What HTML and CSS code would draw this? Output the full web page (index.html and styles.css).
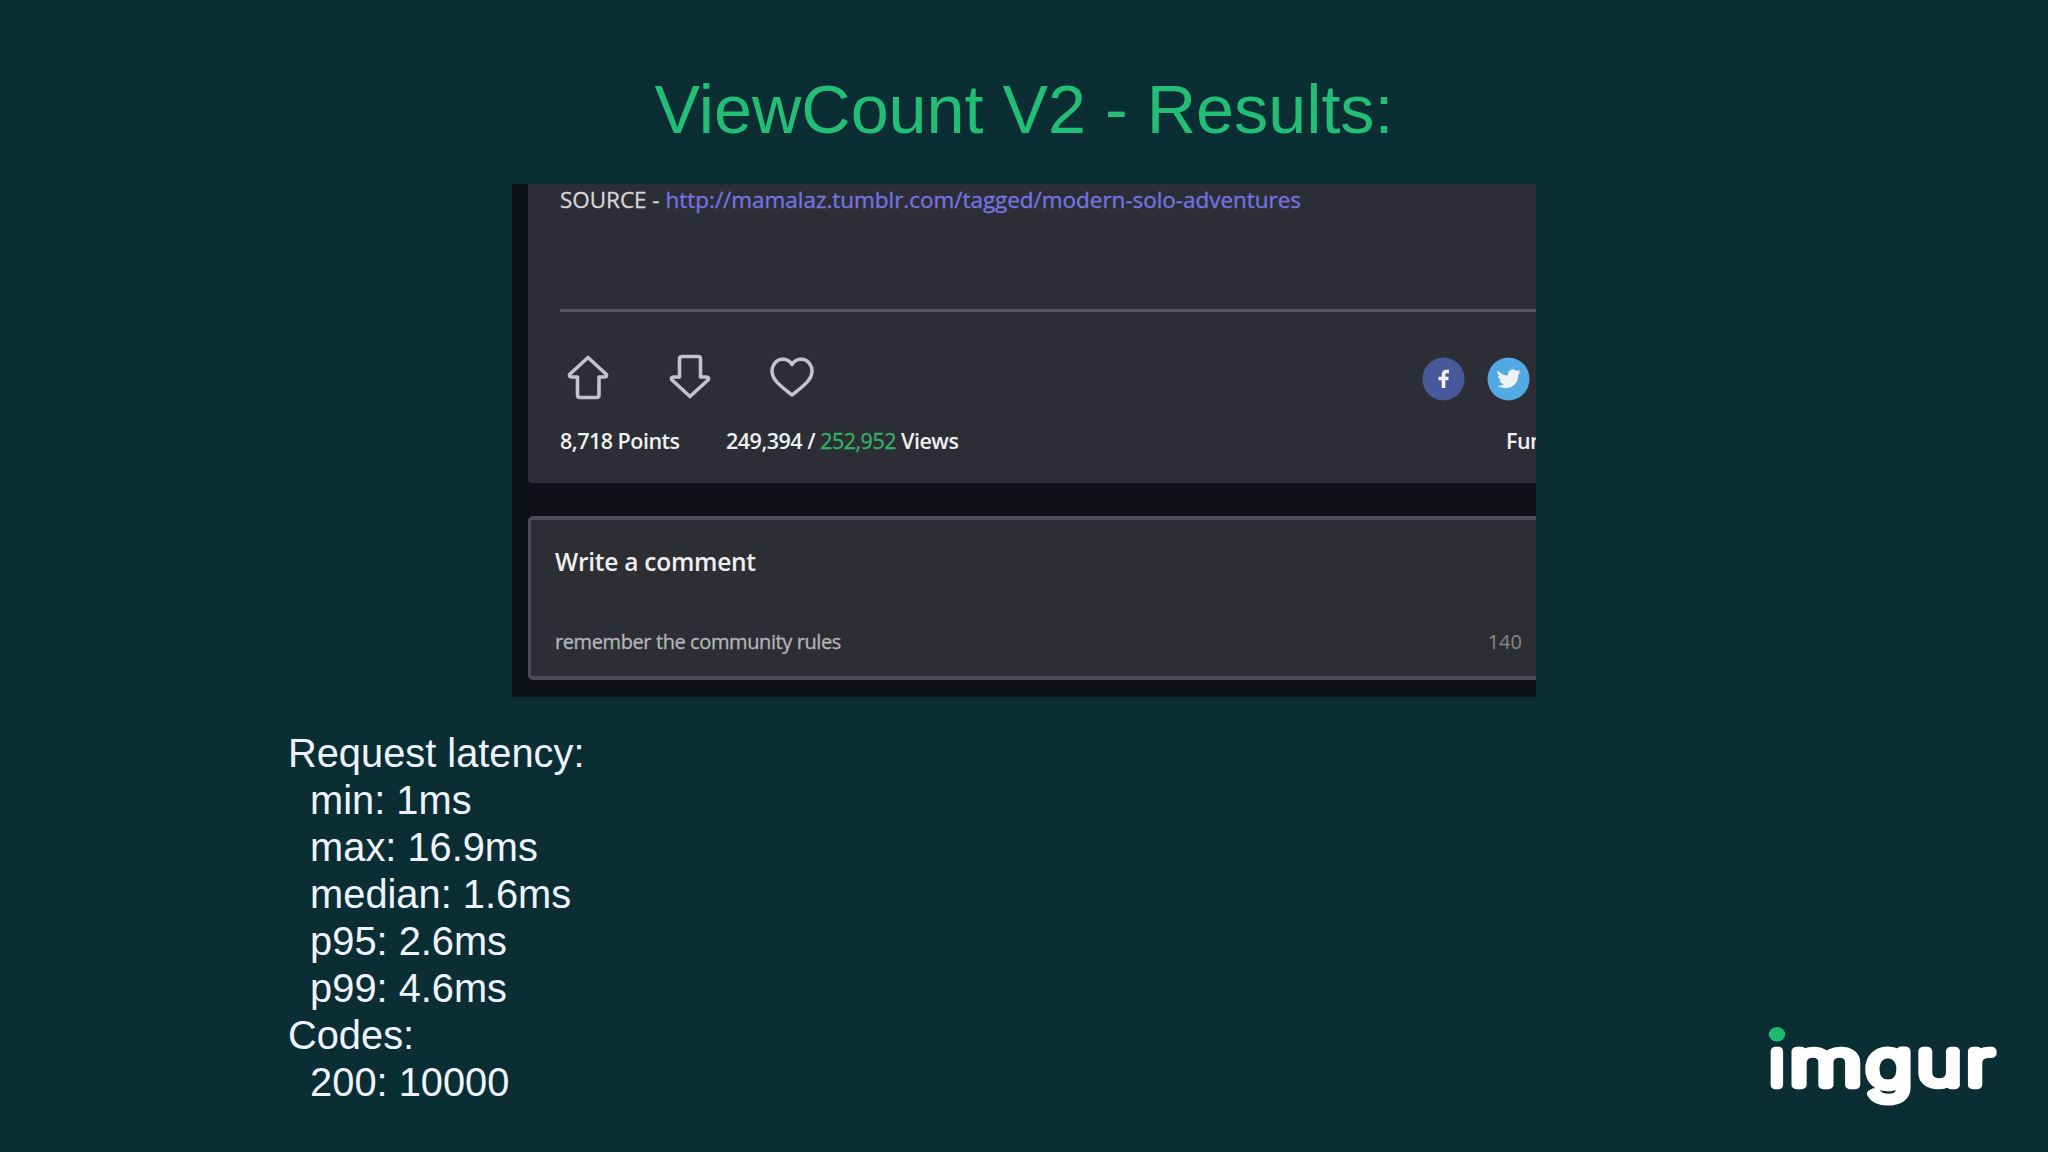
FILE: index.html
```html
<!DOCTYPE html>
<html lang="en">
<head>
    <meta charset="utf-8">
    <title>ViewCount V2 - Results</title>
    <link rel="stylesheet" href="styles.css">
</head>
<body>
    <main class="slide">
        <h1 class="slide-title">ViewCount V2 - Results:</h1>

        <section class="capture">
            <div class="post">
                <p class="source"><span>SOURCE -</span> <a class="source-link">http://mamalaz.tumblr.com/tagged/modern-solo-adventures</a></p>
                <div class="actions">
                    <div class="votes">
                        <svg width="44" height="46" viewBox="0 0 44 46"><path d="M22 3.5 L40.5 20.5 Q41 23 38 23 H33 V41 Q33 43.5 30.5 43.5 H14 Q11.5 43.5 11.5 41 V23 H6 Q3 23 3.5 20.5 Z"/></svg>
                        <svg width="44" height="46" viewBox="0 0 44 46"><path d="M22 42.5 L40.5 25.5 Q41 23 38 23 H32.5 V5 Q32.5 2.5 30 2.5 H14 Q11.5 2.5 11.5 5 V23 H6 Q3 23 3.5 25.5 Z"/></svg>
                        <svg width="44" height="46" viewBox="0 0 44 46"><path d="M22 10.5 C18 4 9 3.5 4.5 9.5 C0.5 15 1.5 22 6 27 C10 32 17 37 22 41 C27 37 34 32 38 27 C42.5 22 43.5 15 39.5 9.5 C35 3.5 26 4 22 10.5 Z"/></svg>
                    </div>
                    <div class="share">
                        <svg width="43" height="44" viewBox="0 0 43 44"><ellipse cx="21.5" cy="22" rx="21" ry="21.5" fill="#48599b"/><path d="M27 14.5 H24.5 Q21.5 14.5 21.5 18 V31 M16.5 21.5 H26.5" fill="none" stroke="#f1f5fb" stroke-width="3.6"/></svg>
                        <svg width="43" height="44" viewBox="0 0 43 44"><ellipse cx="21.5" cy="22" rx="21" ry="21.5" fill="#52a9e4"/><path d="M10.5 13.5 C13.5 16.5 17 18.5 21 18.5 C20.5 12.5 26.5 11 29.5 14 L33 12.7 L31.5 15.5 L33.5 15.3 L31.3 17.7 C31.5 25 26 31 19.5 31 C16 31 13 30.5 10.8 29 C13.5 29 15.5 28.3 17 27 C14.5 26.5 13 25.5 12.5 23.5 L14.5 23.3 C12 22.5 11 20.5 11 18.5 L13 19 C10.8 17.5 10 15.5 10.5 13.5 Z" fill="#f1f3f2"/></svg>
                    </div>
                </div>
                <div class="stats">
                    <span class="points">8,718 Points</span>
                    <span class="views">249,394 / <em>252,952</em> Views</span>
                    <span class="tag">Fun</span>
                </div>
            </div>

            <div class="comment">
                <p class="comment-title">Write a comment</p>
                <div class="comment-foot">
                    <span class="rules">remember the community rules</span>
                    <span class="count">140</span>
                </div>
            </div>
        </section>

        <pre class="results">Request latency:
  min: 1ms
  max: 16.9ms
  median: 1.6ms
  p95: 2.6ms
  p99: 4.6ms
Codes:
  200: 10000</pre>

        <svg class="logo" width="240" height="92" viewBox="0 0 240 92">
            <g class="logo-text">
                <text transform="translate(17 64.5) scale(1.1 1)">ı</text>
                <text transform="translate(65.8 64.5) scale(1.34 1)">m</text>
                <text transform="translate(129.2 66.8) scale(1.26 1.06)">g</text>
                <text transform="translate(179 64.5) scale(1.23 1)">u</text>
                <text transform="translate(219.7 64.5) scale(1.27 1)">r</text>
            </g>
            <ellipse cx="17" cy="14.3" rx="8.2" ry="7.3" fill="#1fba70"/>
        </svg>
    </main>
</body>
</html>
```
FILE: styles.css
```css
* {
    box-sizing: border-box;
}

body {
    margin: 0;
    background-color: #0b2d34;
}

.slide {
    position: relative;
    width: 2048px;
    height: 1152px;
    overflow: hidden;
    font-family: "Liberation Sans", Arial, sans-serif;
}

.slide-title {
    margin: 0;
    padding-top: 69px;
    height: 184px;
    font-size: 68.3px;
    font-weight: 400;
    line-height: 80px;
    text-align: center;
    color: #22be76;
}

/* cropped screenshot of the post page */
.capture {
    width: 1024px;
    height: 513px;
    margin: 0 auto;
    padding-left: 16px;
    overflow: hidden;
    background-color: #101116;
    font-family: "Open Sans", "Noto Sans", sans-serif;
    white-space: nowrap;
}

.post {
    height: 299px;
    padding-left: 32px;
    background-color: #2d2e35;
    border-bottom-left-radius: 4px;
}

.source {
    display: flex;
    gap: 6px;
    margin: 0;
    height: 128px;
    border-bottom: 3px solid #53545c;
    font-size: 22.5px;
    line-height: 32px;
    letter-spacing: -0.04px;
    color: #d5d6d9;
    -webkit-text-stroke: 0.3px;
}

.source-link {
    color: #7773e6;
}

.actions {
    display: flex;
    justify-content: space-between;
    padding: 42px 6px 0 6px;
    height: 113px;
}

.votes {
    display: flex;
    gap: 58px;
}

.votes path {
    fill: none;
    stroke: #c3c3ca;
    stroke-width: 3.6;
    stroke-linejoin: round;
}

.share {
    display: flex;
    gap: 22px;
    padding-top: 3px;
}

.stats {
    display: flex;
    font-size: 21.5px;
    font-weight: 600;
    line-height: 32px;
    letter-spacing: -0.5px;
    color: #eff0f4;
}

.points {
    width: 166px;
}

.views em {
    font-style: normal;
    font-weight: 400;
    color: #34b266;
    -webkit-text-stroke: 0.3px;
}

.tag {
    margin-left: auto;
    width: 30px;
}

.comment {
    height: 164px;
    margin-top: 33px;
    padding: 25px 14px 0 24px;
    border: 4px solid #4c4d54;
    border-left-width: 3px;
    border-right: none;
    border-radius: 5px 0 0 5px;
    background-color: #2d2e33;
}

.comment-title {
    margin: 0;
    height: 82px;
    font-size: 24.5px;
    font-weight: 600;
    line-height: 34px;
    letter-spacing: -0.25px;
    color: #eeeff2;
}

.comment-foot {
    display: flex;
    justify-content: space-between;
    font-size: 20px;
    line-height: 30px;
    color: #b4b5b9;
}

.rules {
    letter-spacing: -0.4px;
    -webkit-text-stroke: 0.3px;
}

.count {
    color: #85868b;
}

.results {
    margin: 33px 0 0 288px;
    width: 500px;
    font-family: "Liberation Sans", Arial, sans-serif;
    font-size: 39.8px;
    line-height: 47px;
    color: #eff4fc;
}

/* brand mark over the slide corner */
.logo {
    position: absolute;
    left: 1760px;
    top: 1020px;
}

.logo-text {
    font-family: Inter, "Open Sans", sans-serif;
    font-size: 62px;
    font-weight: 200;
    fill: #fff;
    stroke: #fff;
    stroke-width: 8.5;
    stroke-linejoin: round;
    text-anchor: middle;
}
```
